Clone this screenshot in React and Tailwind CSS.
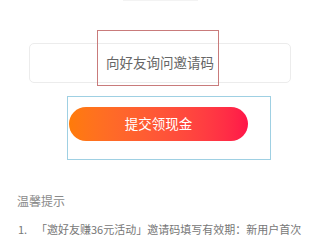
import React from "react";

const App = () => {
  return (
    <div className="w-[320px] h-[240px] bg-white overflow-hidden font-['Noto_Sans_CJK_SC','Noto_Sans',sans-serif]">
      {/* bottom edge of the block above */}
      <div className="mx-auto w-[75px] h-px bg-[#f3f3f3]"></div>

      {/* invite code input */}
      <div className="relative mx-[29px] mt-[42px] h-[40px] rounded-[5px] border border-[#ececec] flex items-center justify-center">
        <span className="text-[13.5px] leading-none text-[#666666]">向好友询问邀请码</span>
        <div className="absolute left-[67px] -top-[14px] w-[122px] h-[56px] border border-[#c97b7b]"></div>
      </div>

      {/* submit */}
      <div className="ml-[67px] mt-[13px] w-[204px] h-[64px] border-[1.5px] border-[#9fd0e3] pt-[9.5px] pl-[1px]">
        <button className="w-[179px] h-[34px] rounded-full bg-linear-to-r from-[#ff7b08] to-[#ff1449] text-white text-[13.5px] leading-none">
          提交领现金
        </button>
      </div>

      {/* tips */}
      <p className="ml-[17px] mt-[32px] text-[12px] leading-[17px] text-[#8a8a8a]">温馨提示</p>
      <div className="flex ml-[18px] mt-[12px] pr-[10px] text-[11px] leading-[17px] text-[#777777]">
        <span className="w-[18px] shrink-0">1.</span>
        <span>「邀好友赚36元活动」邀请码填写有效期：新用户首次登录后7天内可填写邀请码</span>
      </div>
    </div>
  );
};

export default App;
